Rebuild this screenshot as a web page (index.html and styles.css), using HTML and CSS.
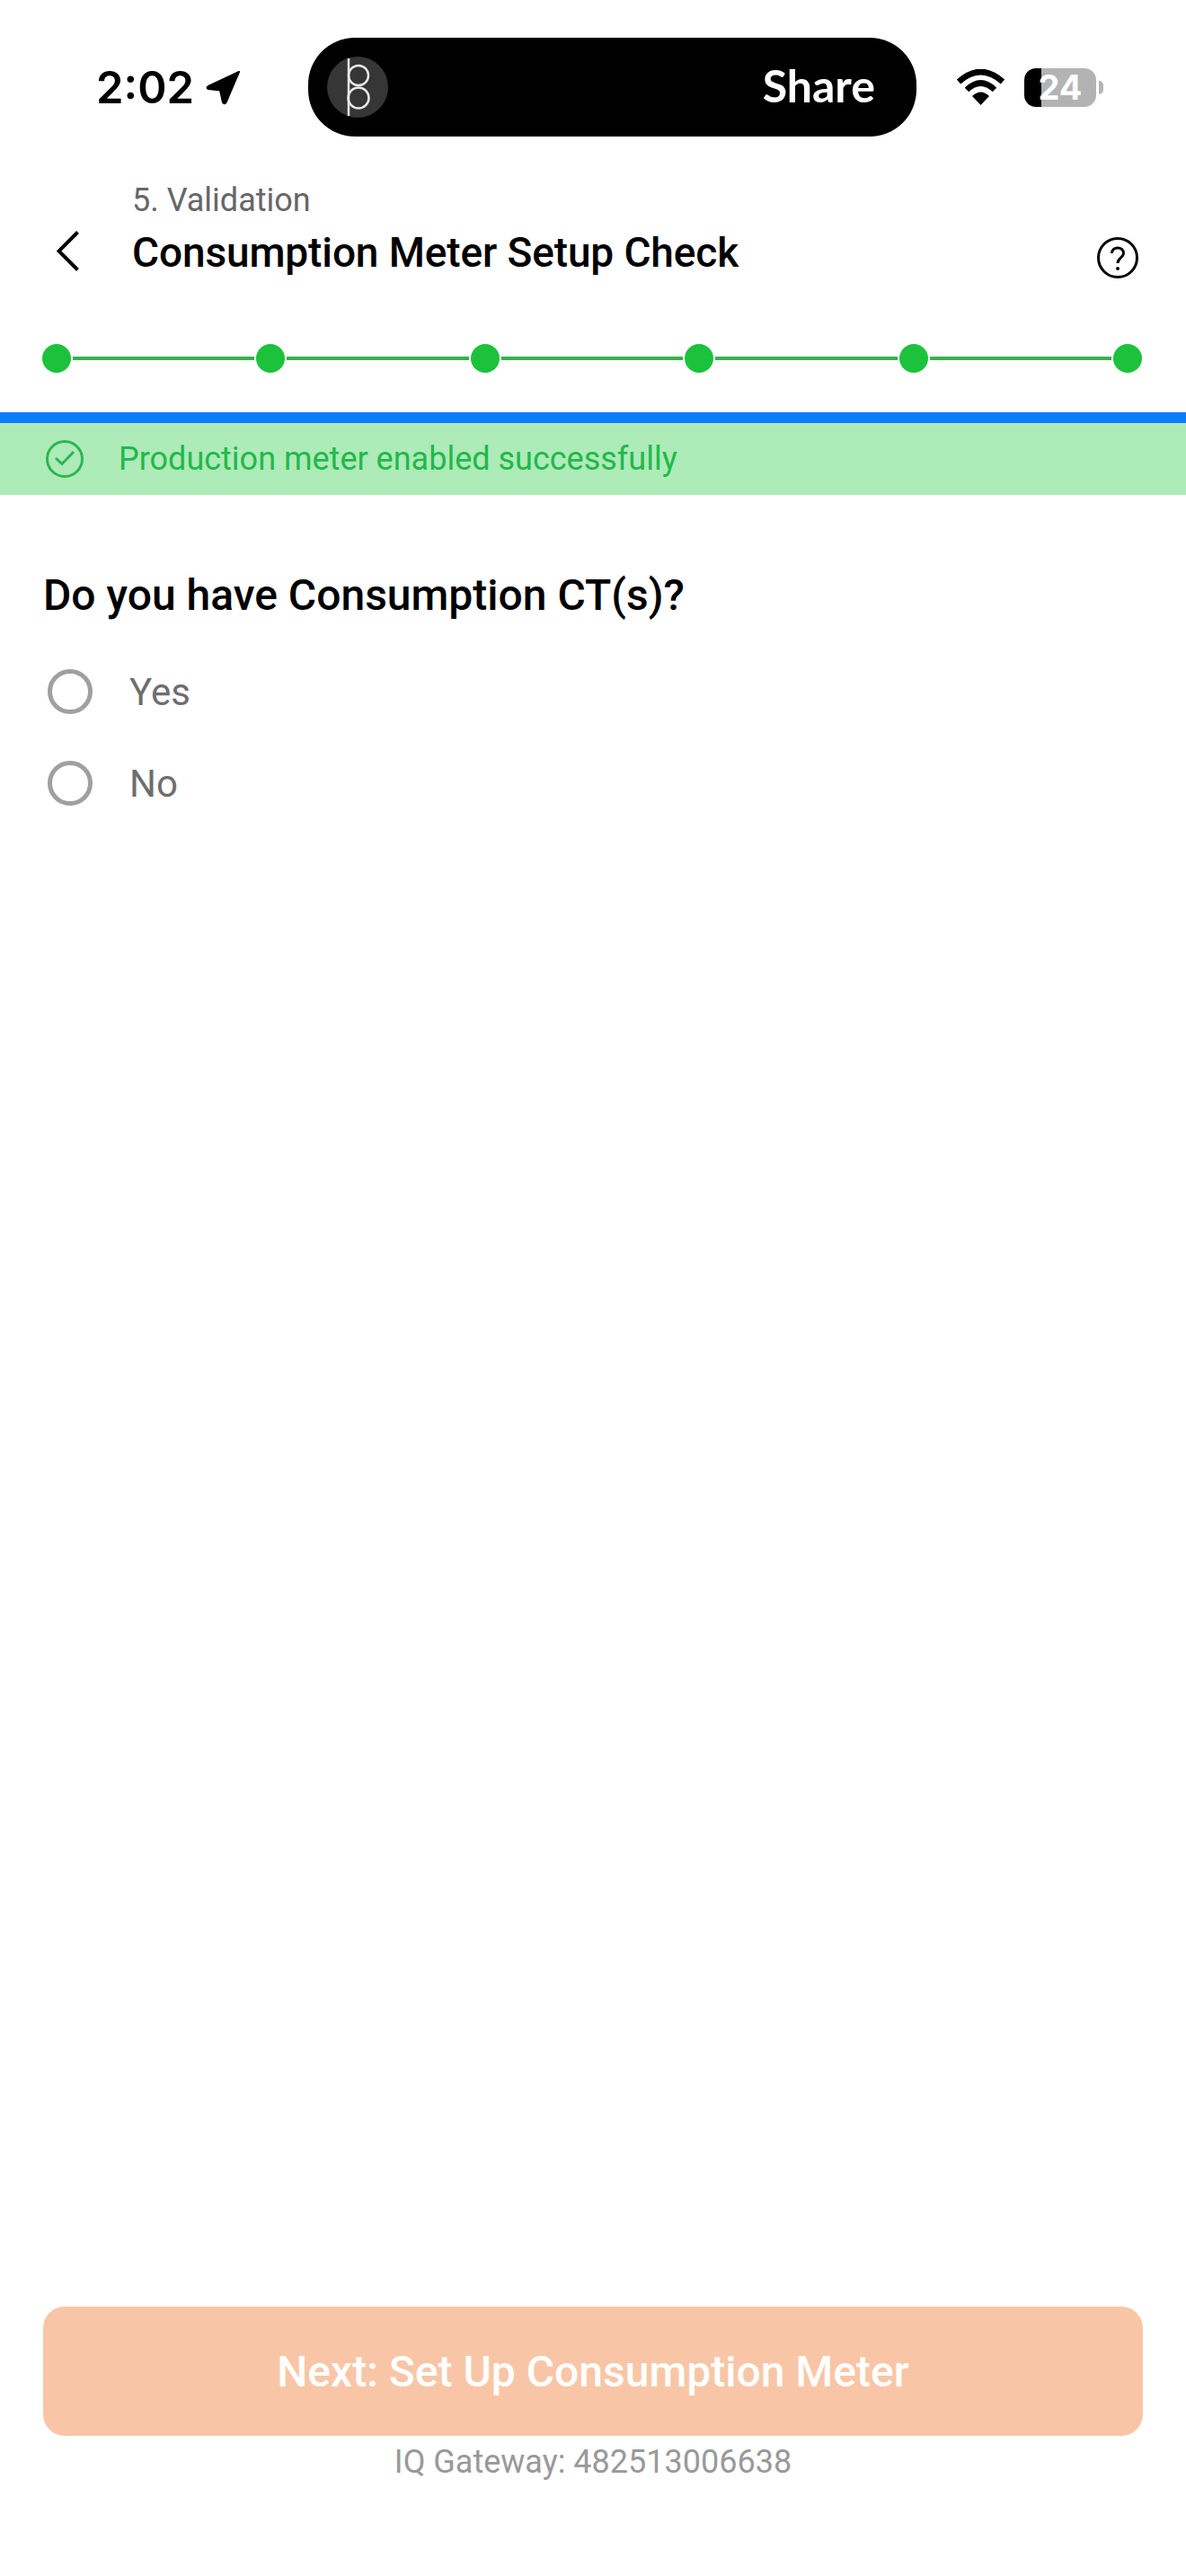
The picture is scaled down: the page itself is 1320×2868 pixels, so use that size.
FILE: index.html
```html
<!DOCTYPE html>
<html lang="en">
<head>
    <meta charset="UTF-8">
    <title>Consumption Meter Setup Check</title>
    <link rel="stylesheet" href="styles.css">
</head>
<body>
<div class="screen">
    <div class="status-bar">
        <div class="status-time">
            <span>2:02</span>
            <svg class="location" viewBox="0 0 39 39"><path d="M37 2 L3 18 Q0 20 3 21 L16 22.5 L19 36 Q21 39 23 35 Z" fill="#000" stroke="#000" stroke-width="2" stroke-linejoin="round"/></svg>
        </div>
        <div class="island">
            <svg class="island-logo" viewBox="0 0 68 68">
                <circle cx="34" cy="34" r="34" fill="#363636"/>
                <path d="M24 2 V66" stroke="#e8e8e8" stroke-width="2.5" fill="none"/>
                <circle cx="35" cy="21" r="11" stroke="#e8e8e8" stroke-width="2.5" fill="none"/>
                <circle cx="35" cy="46" r="11.5" stroke="#e8e8e8" stroke-width="2.5" fill="none"/>
            </svg>
            <span class="island-share">Share</span>
        </div>
        <div class="status-right">
            <svg class="wifi" viewBox="0 0 55 40">
                <path d="M3 14 Q27.5 -8 52 14" stroke="#000" stroke-width="6.5" fill="none"/>
                <path d="M12 23 Q27.5 8 43 23" stroke="#000" stroke-width="6.5" fill="none"/>
                <path d="M18 30 Q27.5 21 37 30 L27.5 40 Z" fill="#000"/>
            </svg>
            <div class="battery"><span>24</span></div>
            <div class="battery-nub"></div>
        </div>
    </div>

    <div class="header">
        <svg class="back" viewBox="0 0 25 45"><path d="M23.5 1.5 L2.5 22.5 L23.5 43.5" stroke="#000" stroke-width="4" fill="none"/></svg>
        <div class="header-text">
            <div class="header-sub">5. Validation</div>
            <div class="header-title">Consumption Meter Setup Check</div>
        </div>
        <svg class="help" viewBox="0 0 46 46">
            <circle cx="23" cy="23" r="21.5" stroke="#000" stroke-width="3" fill="none"/>
            <path d="M16.5 18 C16.5 10 29.5 10 29.5 18 C29.5 23 23 23 23 29" stroke="#000" stroke-width="3" fill="none"/>
            <circle cx="23" cy="35" r="2" fill="#000"/>
        </svg>
    </div>

    <div class="stepper">
        <span class="dot"></span><span class="line"></span>
        <span class="dot"></span><span class="line"></span>
        <span class="dot"></span><span class="line"></span>
        <span class="dot"></span><span class="line"></span>
        <span class="dot"></span><span class="line"></span>
        <span class="dot"></span>
    </div>

    <div class="blue-bar"></div>
    <div class="banner">
        <svg class="banner-icon" viewBox="0 0 42 42">
            <circle cx="21" cy="21" r="19.5" stroke="#2db552" stroke-width="3" fill="none"/>
            <path d="M11 20 L18 26.5 L31 13" stroke="#2db552" stroke-width="3" fill="none"/>
        </svg>
        <span>Production meter enabled successfully</span>
    </div>

    <div class="content">
        <h2 class="question">Do you have Consumption CT(s)?</h2>
        <div class="option"><span class="radio"></span><span>Yes</span></div>
        <div class="option"><span class="radio"></span><span>No</span></div>
    </div>

    <div class="footer">
        <button class="next" type="button" disabled>Next: Set Up Consumption Meter</button>
        <div class="gateway">IQ Gateway: 482513006638</div>
    </div>
</div>
</body>
</html>
```

FILE: styles.css
```css
* { box-sizing: border-box; }
body { margin: 0; background: #fff; font-family: Roboto, "Liberation Sans", sans-serif; }
.screen { width: 1320px; height: 2868px; display: flex; flex-direction: column; }

.status-bar { display: flex; align-items: center; height: 110px; margin-top: 42px; padding-left: 107px; }
.status-time { display: flex; align-items: center; gap: 13px; width: 236px; font-family: Inter, sans-serif; font-weight: 600; font-size: 49px; color: #000; }
.location { width: 39px; height: 39px; }
.island { width: 677px; height: 110px; background: #000; border-radius: 52px; display: flex; align-items: center; justify-content: space-between; padding: 0 46px 0 21px; }
.island-logo { width: 68px; height: 68px; }
.island-share { padding-bottom: 4px; font-family: Lato, sans-serif; font-weight: 700; font-size: 50px; color: #fff; }
.status-right { display: flex; align-items: center; margin-left: 44px; }
.wifi { width: 55px; height: 40px; margin-right: 21px; }
.battery { width: 80px; height: 43px; border-radius: 13px; background: linear-gradient(to right, #000 24%, #b3b3b3 24%); display: flex; align-items: center; justify-content: center; font-family: Inter, sans-serif; font-weight: 700; font-size: 38px; color: #fff; }
.battery-nub { width: 5px; height: 15px; margin-left: 3px; background: #b3b3b3; border-radius: 0 8px 8px 0; }

.header { display: flex; align-items: flex-start; margin-top: 50px; padding: 0 53px 0 63px; }
.back { width: 25px; height: 45px; margin-top: 55px; margin-right: 59px; }
.header-text { flex: 1; }
.header-sub { font-size: 36px; line-height: 42px; color: #666; }
.header-title { font-size: 46px; font-weight: 500; line-height: 54px; margin-top: 10px; letter-spacing: -0.12px; color: #000; }
.help { width: 46px; height: 46px; margin-top: 62px; }

.stepper { display: flex; align-items: center; margin-top: 73px; padding: 0 50px 0 47px; padding-right: 49px; }
.dot { width: 32px; height: 32px; border-radius: 50%; background: #1cc23c; flex: none; }
.line { flex: 1; height: 4px; margin: 0 2px; background: #3cae4e; }

.blue-bar { height: 12px; margin-top: 44px; background: #0a7cff; }
.banner { height: 80px; background: #adebb8; display: flex; align-items: center; gap: 39px; padding-left: 51px; font-size: 36px; color: #22b84a; }
.banner-icon { width: 42px; height: 42px; }

.content { padding: 0 48px; }
.question { margin: 84px 0 0; font-size: 48px; font-weight: 500; line-height: 56px; color: #000; }
.option { display: flex; align-items: center; gap: 41px; height: 102px; padding-left: 5px; font-size: 42px; color: #6e6e6e; }
.option:first-of-type { margin-top: 28px; }
.radio { width: 50px; height: 50px; border: 5px solid #a0a0a0; border-radius: 50%; }

.footer { margin-top: auto; padding: 0 48px 106px; display: flex; flex-direction: column; align-items: center; }
.next { width: 100%; height: 144px; border: none; border-radius: 24px; background: #f8c6a6; color: #fff; font-family: Roboto, sans-serif; font-size: 48px; font-weight: 500; }
.gateway { margin-top: 8px; font-size: 36px; line-height: 42px; color: #999; }
```
